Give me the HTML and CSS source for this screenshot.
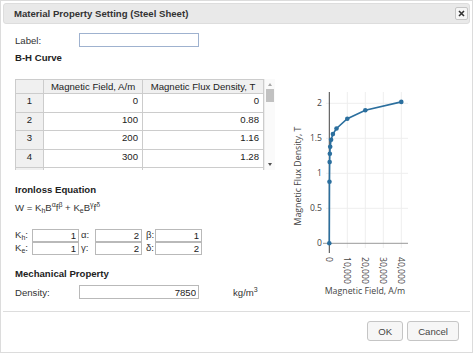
FILE: index.html
```html
<!DOCTYPE html>
<html>
<head>
  <meta charset="utf-8">
  <title>Material Property Setting</title>
  <link rel="stylesheet" href="styles.css">
</head>
<body>
  <div class="dialog">
    <div class="titlebar">
      <span class="title">Material Property Setting (Steel Sheet)</span>
      <button class="close" title="Close">
        <svg width="7" height="7" viewBox="0 0 7 7"><path d="M1 1 L6 6 M6 1 L1 6" stroke="#333" stroke-width="1.6"/></svg>
      </button>
    </div>

    <div class="content">
      <div class="form">
        <div class="field label-row">
          <label>Label:</label>
          <input class="wide label-input" type="text">
        </div>

        <h3 class="heading bh">B-H Curve</h3>
        <div class="grid-wrap">
          <div class="grid-view">
            <table class="grid">
              <tr class="head">
                <th class="corner"></th>
                <th class="c1">Magnetic Field, A/m</th>
                <th class="c2">Magnetic Flux Density, T</th>
              </tr>
              <tr><th>1</th><td>0</td><td>0</td></tr>
              <tr><th>2</th><td>100</td><td>0.88</td></tr>
              <tr><th>3</th><td>200</td><td>1.16</td></tr>
              <tr><th>4</th><td>300</td><td>1.28</td></tr>
              <!-- next row only peeks in under the fold -->
              <tr><th></th><td></td><td></td></tr>
            </table>
          </div>
          <div class="scrollbar">
            <span class="arrow up"></span>
            <span class="thumb"></span>
            <span class="arrow down"></span>
          </div>
        </div>

        <h3 class="heading iron">Ironloss Equation</h3>
        <div class="formula">W = K<sub>h</sub>B<sup>α</sup>f<sup>β</sup> + K<sub>e</sub>B<sup>γ</sup>f<sup>δ</sup></div>
        <div class="coeffs">
          <label>K<sub>h</sub>:</label><input type="text" value="1">
          <label class="mid">α:</label><input type="text" value="2">
          <label class="last">β:</label><input type="text" value="1">
          <label>K<sub>e</sub>:</label><input type="text" value="1">
          <label class="mid">γ:</label><input type="text" value="2">
          <label class="last">δ:</label><input type="text" value="2">
        </div>

        <h3 class="heading mech">Mechanical Property</h3>
        <div class="field density-row">
          <label>Density:</label>
          <input class="wide num" type="text" value="7850">
          <span class="unit">kg/m<sup>3</sup></span>
        </div>
      </div>

      <div class="chart">
        <svg width="192" height="220" viewBox="0 0 192 220">
          <!-- grid -->
          <g stroke="#eeeeee" stroke-width="1">
            <line x1="70.3" y1="12" x2="70.3" y2="168"/>
            <line x1="88.3" y1="12" x2="88.3" y2="168"/>
            <line x1="106.3" y1="12" x2="106.3" y2="168"/>
            <line x1="124.3" y1="12" x2="124.3" y2="168"/>
            <line x1="49" y1="23.3" x2="131" y2="23.3"/>
            <line x1="49" y1="58.3" x2="131" y2="58.3"/>
            <line x1="49" y1="93.3" x2="131" y2="93.3"/>
            <line x1="49" y1="128.3" x2="131" y2="128.3"/>
          </g>
          <line x1="46" y1="163.3" x2="131" y2="163.3" stroke="#999" stroke-width="1"/>
          <line x1="52.3" y1="12" x2="52.3" y2="173" stroke="#444" stroke-width="1"/>

          <!-- y ticks -->
          <g class="tick" text-anchor="end">
            <text x="45" y="26.3">2</text>
            <text x="45" y="61.3">1.5</text>
            <text x="45" y="96.3">1</text>
            <text x="45" y="131.3">0.5</text>
            <text x="45" y="166.3">0</text>
          </g>
          <!-- x ticks -->
          <g class="tick">
            <text transform="translate(49.3 177) rotate(90)">0</text>
            <text transform="translate(67.3 177) rotate(90)">10,000</text>
            <text transform="translate(85.3 177) rotate(90)">20,000</text>
            <text transform="translate(103.3 177) rotate(90)">30,000</text>
            <text transform="translate(121.3 177) rotate(90)">40,000</text>
          </g>
          <text class="axis-title" text-anchor="middle" transform="translate(24 96) rotate(-90)">Magnetic Flux Density, T</text>
          <text class="axis-title" text-anchor="middle" x="88" y="214">Magnetic Field, A/m</text>

          <!-- curve -->
          <polyline fill="none" stroke="#2b6f9e" stroke-width="1.6"
            points="52.3,163.3 52.48,101.7 52.66,82.1 52.84,73.7 53.2,66.7 54.1,59.7 55.9,54.1 59.5,48.5 70.3,38.7 88.3,30.3 124.3,21.9"/>
          <g fill="#2b6f9e">
            <circle cx="52.3" cy="163.3" r="2.3"/>
            <circle cx="52.48" cy="101.7" r="2.3"/>
            <circle cx="52.66" cy="82.1" r="2.3"/>
            <circle cx="52.84" cy="73.7" r="2.3"/>
            <circle cx="53.2" cy="66.7" r="2.3"/>
            <circle cx="54.1" cy="59.7" r="2.3"/>
            <circle cx="55.9" cy="54.1" r="2.3"/>
            <circle cx="59.5" cy="48.5" r="2.3"/>
            <circle cx="70.3" cy="38.7" r="2.3"/>
            <circle cx="88.3" cy="30.3" r="2.3"/>
            <circle cx="124.3" cy="21.9" r="2.3"/>
          </g>
        </svg>
      </div>
    </div>

    <div class="buttons">
      <button class="btn">OK</button>
      <button class="btn">Cancel</button>
    </div>
  </div>
</body>
</html>
```

FILE: styles.css
```css
/* page */
* {
  box-sizing: border-box; }
body {
  margin: 0;
  font-family: "Liberation Sans", Arial, sans-serif;
  font-size: 9.6px;
  color: #333;
  background: #fff; }

/* dialog frame */
.dialog {
  width: 473px; height: 353px;
  border: 1px solid #dcdcdc;
  padding: 2px;
  display: flex;
  flex-direction: column; }
.titlebar {
  flex: none;
  height: 21px;
  display: flex;
  align-items: center;
  justify-content: space-between;
  padding: 0 1px 0 10px;
  background: #e9e9e9;
  border: 1px solid #dddddd;
  border-radius: 3px;
  font-weight: bold;
  color: #333; }
.close {
  width: 13px; height: 13px;
  padding: 0;
  display: flex;
  align-items: center;
  justify-content: center;
  background: #f6f6f6;
  border: 1px solid #c5c5c5;
  border-radius: 2px; }

/* body of the dialog */
.content {
  flex: 1;
  display: flex;
  padding-left: 12px; }
.form {
  width: 262px; }
.field {
  display: flex;
  align-items: center;
  height: 14px; }
.field label {
  width: 64px; }
.label-row {
  margin-top: 9px; }
.heading {
  margin: 0;
  font-size: 9.6px;
  line-height: 12px;
  font-weight: bold;
  color: #222; }
.bh { margin-top: 5px; }
.iron { margin-top: 14px; }
.mech { margin-top: 13px; }

input {
  font: inherit;
  color: #222;
  margin: 0;
  padding: 0 2px;
  border: 1px solid #b9b9b9;
  background: #fff;
  text-align: right; }
.wide {
  width: 120px; height: 14px; }
.label-input {
  border-color: #9fb2cf; }

/* handsontable-ish grid */
.grid-wrap {
  display: flex;
  height: 91px;
  margin-top: 15px; }
.grid-view {
  width: 249px;
  overflow: hidden; }
.grid {
  border-collapse: separate;
  border-spacing: 0;
  table-layout: fixed;
  width: 249px; }
.grid th, .grid td {
  height: 18.5px;
  padding: 0 4px;
  line-height: 14px;
  vertical-align: top;
  border-right: 1px solid #cccccc;
  border-bottom: 1px solid #cccccc;
  white-space: nowrap;
  overflow: hidden;
  color: #222; }
.grid th {
  font-weight: normal;
  text-align: center;
  background: #f0f0f0;
  border-left: 1px solid #cccccc; }
.grid td {
  text-align: right;
  background: #fff; }
.grid .head th {
  height: 14px;
  line-height: 13px;
  border-top: 1px solid #cccccc; }
.grid .head th + th {
  border-left: none; }
.grid .corner { width: 29px; }
.grid .c1 { width: 99px; }
.grid .c2 { width: 121px; }

.scrollbar {
  position: relative;
  width: 11px;
  background: #fafafa;
  border-left: 1px solid #ececec; }
.scrollbar .thumb {
  position: absolute;
  left: 1px; top: 10px;
  width: 8px; height: 13px;
  background: #c1c1c1; }
.scrollbar .arrow {
  position: absolute;
  left: 3px;
  border-left: 2px solid transparent;
  border-right: 2px solid transparent; }
.scrollbar .up {
  top: 4px;
  border-bottom: 3px solid #a8a8a8; }
.scrollbar .down {
  bottom: 4px;
  border-top: 3px solid #505050; }

/* ironloss */
.formula {
  margin-top: 6px;
  line-height: 12px;
  color: #333; }
sub, sup {
  font-size: 7px;
  line-height: 0; }
sub { vertical-align: -2px; }
sup { vertical-align: 4px; }
.coeffs {
  display: grid;
  grid-template-columns: 17px 47px 16px 47px 13px 47px;
  grid-auto-rows: 13px;
  margin-top: 15px; }
.coeffs label {
  line-height: 12px; }
.coeffs .mid { padding-left: 2px; }
.coeffs .last { padding-left: 4px; }
.coeffs input {
  width: 47px; height: 13px; }

/* density */
.density-row {
  margin-top: 5px; }
.unit {
  margin-left: 34px; }

/* chart */
.chart {
  margin-top: 56px; }
.chart svg {
  display: block; }
.tick, .axis-title {
  font-family: "Open Sans", sans-serif;
  font-size: 8.6px;
  fill: #444; }
.axis-title {
  font-size: 8.8px; }

/* footer */
.buttons {
  flex: none;
  height: 39px;
  display: flex;
  justify-content: flex-end;
  gap: 4px;
  padding: 9px 11px 0 0;
  border-top: 1px solid #dddddd; }
.btn {
  height: 20px;
  padding: 0 10px;
  font: inherit;
  color: #454545;
  background: #f6f6f6;
  border: 1px solid #c5c5c5;
  border-radius: 3px; }
```
